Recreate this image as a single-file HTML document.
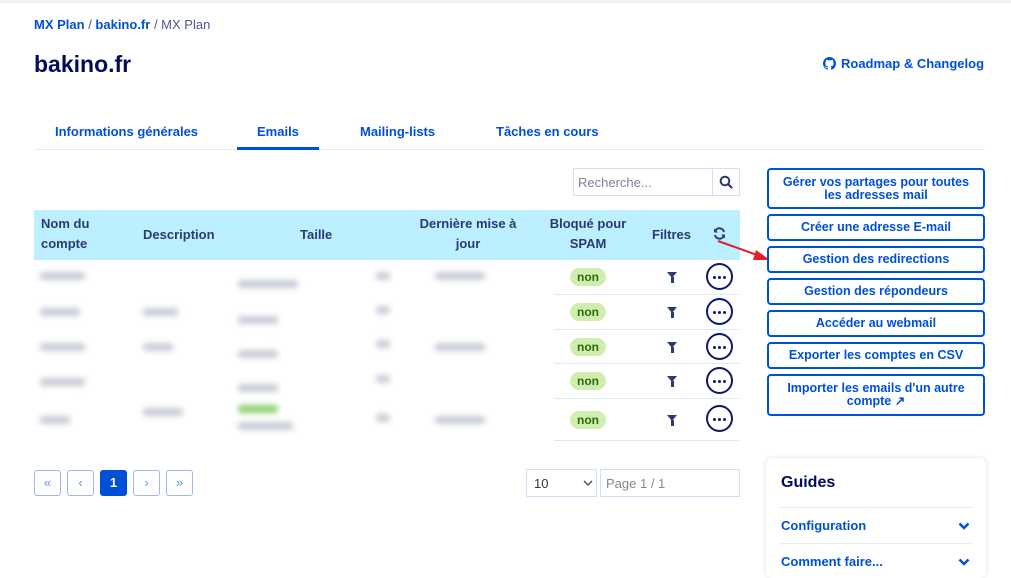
<!DOCTYPE html>
<html><head><meta charset="utf-8"><style>
*{box-sizing:border-box;margin:0;padding:0}
body{width:1011px;height:569px;overflow:hidden;background:#fff;font-family:"Liberation Sans",sans-serif;color:#000e9c;position:relative}
.a{position:absolute}
.bc{top:17px;left:34px;font-size:13px;color:#4d5693}
.bc b{color:#0050d7}
h1{position:absolute;top:51px;left:34px;font-size:23px;color:#000d5a;font-weight:bold}
.tab{top:124px;font-size:13px;font-weight:bold;color:#0050d7}
.btn{position:absolute;left:767px;width:218px;border:2px solid #0050d7;border-radius:4px;font-size:12.5px;font-weight:bold;color:#0050d7;text-align:center;line-height:13px;display:flex;align-items:center;justify-content:center;background:#fff}
.blur{position:absolute;background:#c9ccd8;filter:blur(3px);border-radius:3px;height:8px}
.non{position:absolute;left:570px;width:36px;height:18px;border-radius:9px;background:#cfeeb0;color:#2f6a0f;font-size:12px;font-weight:bold;text-align:center;line-height:18px}
.dots{position:absolute;left:706px;width:27px;height:27px;border:2px solid #0c1a6b;border-radius:50%}
.dots:before{content:"";position:absolute;left:5px;top:10.5px;width:3px;height:3px;border-radius:50%;background:#0c1a6b;box-shadow:5px 0 #0c1a6b,10px 0 #0c1a6b}
.fil{position:absolute;left:667px;width:0;height:0;border-left:5px solid transparent;border-right:5px solid transparent;border-top:6px solid #2c3a73}
.fil:after{content:"";position:absolute;left:-1.5px;top:-1px;width:3px;height:6px;background:#2c3a73}
.hr{position:absolute;left:554px;width:186px;height:1px;background:#dde9f5}
.pg{position:absolute;top:470px;width:27px;height:26px;border:1px solid #9fb8e6;border-radius:3px;color:#6b8fd6;text-align:center;line-height:24px;font-size:13px}
</style></head><body>
<div class="a" style="top:0;left:0;width:1011px;height:3px;background:#eef0f6"></div>
<div class="a bc"><b>MX Plan</b> / <b>bakino.fr</b> / MX Plan</div>
<h1>bakino.fr</h1>
<svg class="a" style="top:57px;left:823px" width="13" height="13" viewBox="0 0 16 16"><path fill="#0050d7" d="M8 0C3.58 0 0 3.58 0 8c0 3.54 2.29 6.53 5.47 7.59.4.07.55-.17.55-.38v-1.33c-2.23.48-2.7-1.07-2.7-1.07-.36-.92-.89-1.17-.89-1.17-.73-.5.05-.49.05-.49.8.06 1.23.83 1.23.83.72 1.22 1.87.87 2.33.66.07-.52.28-.87.51-1.07-1.78-.2-3.64-.89-3.64-3.95 0-.87.31-1.59.82-2.15-.08-.2-.36-1.02.08-2.12 0 0 .67-.21 2.2.82A7.6 7.6 0 018 3.9c.68 0 1.36.09 2 .27 1.53-1.04 2.2-.82 2.2-.82.44 1.1.16 1.92.08 2.12.51.56.82 1.27.82 2.15 0 3.07-1.87 3.75-3.65 3.95.29.25.54.73.54 1.48v2.2c0 .21.15.46.55.38A8.01 8.01 0 0016 8c0-4.42-3.58-8-8-8z"/></svg>
<div class="a" style="top:56px;left:841px;font-size:13px;font-weight:bold;color:#0050d7">Roadmap &amp; Changelog</div>
<div class="a tab" style="left:55px">Informations générales</div>
<div class="a tab" style="left:257px">Emails</div>
<div class="a tab" style="left:360px">Mailing-lists</div>
<div class="a tab" style="left:496px">Tâches en cours</div>
<div class="a" style="top:149px;left:34px;width:951px;height:1px;background:#e6ebf3"></div>
<div class="a" style="top:147px;left:237px;width:82px;height:3px;background:#0050d7"></div>
<div class="a" style="top:168px;left:573px;width:167px;height:28px;border:1px solid #cfe0f5;font-size:13px;color:#7b80a0;padding:6px 4px">Recherche...</div>
<div class="a" style="top:168px;left:712px;width:1px;height:28px;background:#cfe0f5"></div>
<svg class="a" style="top:175px;left:719px" width="14" height="14" viewBox="0 0 14 14"><circle cx="6" cy="6" r="4.3" fill="none" stroke="#2c3a73" stroke-width="2"/><line x1="9" y1="9" x2="12.5" y2="12.5" stroke="#2c3a73" stroke-width="2.2" stroke-linecap="round"/></svg>
<div class="a" style="top:210px;left:34px;width:706px;height:50px;background:#bcefff"></div>
<div class="a" style="top:214px;left:41px;font-size:13px;font-weight:bold;color:#2c3a73;line-height:20px">Nom du<br>compte</div>
<div class="a" style="top:227px;left:143px;font-size:13px;font-weight:bold;color:#2c3a73">Description</div>
<div class="a" style="top:227px;left:300px;font-size:13px;font-weight:bold;color:#2c3a73">Taille</div>
<div class="a" style="top:214px;left:413px;width:110px;text-align:center;font-size:13px;font-weight:bold;color:#2c3a73;line-height:20px">Dernière mise à<br>jour</div>
<div class="a" style="top:214px;left:545px;width:86px;text-align:center;font-size:13px;font-weight:bold;color:#2c3a73;line-height:20px">Bloqué pour<br>SPAM</div>
<div class="a" style="top:227px;left:652px;font-size:13px;font-weight:bold;color:#2c3a73">Filtres</div>
<svg class="a" style="top:227px;left:713px" width="13" height="13" viewBox="0 0 13 13"><path d="M11 5A4.6 4.6 0 002.3 4M2 8a4.6 4.6 0 008.7 1" fill="none" stroke="#2c3a73" stroke-width="2"/><path d="M1 1.5v4h4zM12 11.5v-4h-4z" fill="#2c3a73"/></svg>
<div class="blur" style="top:272px;left:40px;width:45px"></div><div class="blur" style="top:280px;left:238px;width:60px"></div><div class="blur" style="top:272px;left:435px;width:50px"></div><div class="blur" style="top:272px;left:376px;width:14px"></div>
<div class="blur" style="top:308px;left:40px;width:40px"></div><div class="blur" style="top:308px;left:143px;width:35px"></div><div class="blur" style="top:316px;left:238px;width:40px"></div><div class="blur" style="top:306px;left:376px;width:14px"></div>
<div class="blur" style="top:343px;left:40px;width:45px"></div><div class="blur" style="top:343px;left:143px;width:30px"></div><div class="blur" style="top:350px;left:238px;width:40px"></div><div class="blur" style="top:343px;left:435px;width:50px"></div><div class="blur" style="top:340px;left:376px;width:14px"></div>
<div class="blur" style="top:378px;left:40px;width:45px"></div><div class="blur" style="top:384px;left:238px;width:40px"></div><div class="blur" style="top:375px;left:376px;width:14px"></div>
<div class="blur" style="top:416px;left:40px;width:30px"></div><div class="blur" style="top:408px;left:143px;width:40px"></div><div class="blur" style="top:405px;left:238px;width:40px;background:#8fcf70"></div><div class="blur" style="top:422px;left:238px;width:55px"></div><div class="blur" style="top:416px;left:435px;width:50px"></div><div class="blur" style="top:414px;left:376px;width:14px"></div>
<div class="non" style="top:268px">non</div><div class="non" style="top:303px">non</div><div class="non" style="top:338px">non</div><div class="non" style="top:372px">non</div><div class="non" style="top:411px">non</div>
<div class="fil" style="top:272px"></div><div class="fil" style="top:307px"></div><div class="fil" style="top:342px"></div><div class="fil" style="top:376px"></div><div class="fil" style="top:415px"></div>
<div class="dots" style="top:263px"></div><div class="dots" style="top:298px"></div><div class="dots" style="top:333px"></div><div class="dots" style="top:367px"></div><div class="dots" style="top:405px"></div>
<div class="hr" style="top:294px"></div><div class="hr" style="top:329px"></div><div class="hr" style="top:363px"></div><div class="hr" style="top:398px"></div><div class="hr" style="top:440px"></div>
<div class="pg" style="left:34px">«</div><div class="pg" style="left:67px">‹</div>
<div class="pg" style="left:100px;background:#0050d7;color:#fff;border-color:#0050d7;font-weight:bold">1</div>
<div class="pg" style="left:133px">›</div><div class="pg" style="left:166px">»</div>
<div class="a" style="top:469px;left:526px;width:71px;height:28px;border:1px solid #cfe0f5;font-size:13px;color:#333;padding:6px 7px">10</div>
<svg class="a" style="top:480px;left:583px" width="10" height="7"><path d="M1 1l4 4 4-4" fill="none" stroke="#555" stroke-width="1.5"/></svg>
<div class="a" style="top:469px;left:600px;width:140px;height:28px;border:1px solid #cfe0f5;font-size:13px;color:#888;padding:6px 5px">Page 1 / 1</div>
<svg class="a" style="top:238px;left:716px" width="56" height="26"><line x1="2" y1="3" x2="44" y2="18" stroke="#e3202a" stroke-width="2"/><polygon points="54,22 40,12 37,22" fill="#e3202a"/></svg>
<div class="btn" style="top:168px;height:41px">Gérer vos partages pour toutes<br>les adresses mail</div>
<div class="btn" style="top:214px;height:27px">Créer une adresse E-mail</div>
<div class="btn" style="top:246px;height:27px">Gestion des redirections</div>
<div class="btn" style="top:278px;height:27px">Gestion des répondeurs</div>
<div class="btn" style="top:310px;height:27px">Accéder au webmail</div>
<div class="btn" style="top:342px;height:27px">Exporter les comptes en CSV</div>
<div class="btn" style="top:374px;height:42px">Importer les emails d'un autre<br>compte ↗</div>
<div class="a" style="top:458px;left:766px;width:220px;height:120px;border-radius:6px;box-shadow:0 0 4px rgba(0,0,60,.15)"></div>
<div class="a" style="top:474px;left:781px;font-size:16px;font-weight:bold;color:#000d5a">Guides</div>
<div class="a" style="top:507px;left:780px;width:192px;height:1px;background:#e6ebf3"></div>
<div class="a" style="top:518px;left:781px;font-size:13px;font-weight:bold;color:#0050d7">Configuration</div>
<svg class="a" style="top:522px;left:958px" width="12" height="8"><path d="M1.5 1.5l4.5 4.5 4.5-4.5" fill="none" stroke="#0050d7" stroke-width="2.5"/></svg>
<div class="a" style="top:543px;left:780px;width:192px;height:1px;background:#e6ebf3"></div>
<div class="a" style="top:554px;left:781px;font-size:13px;font-weight:bold;color:#0050d7">Comment faire...</div>
<svg class="a" style="top:558px;left:958px" width="12" height="8"><path d="M1.5 1.5l4.5 4.5 4.5-4.5" fill="none" stroke="#0050d7" stroke-width="2.5"/></svg>
</body></html>
